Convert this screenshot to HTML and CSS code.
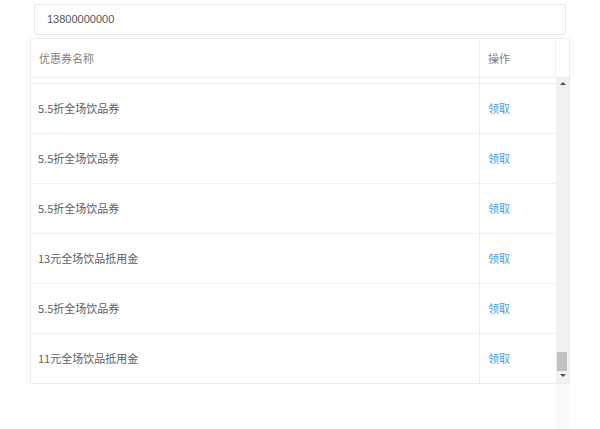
FILE: index.html
```html
<!DOCTYPE html>
<html lang="zh">
<head>
<meta charset="utf-8">
<link rel="stylesheet" href="styles.css">
</head>
<body>
<div class="search">13800000000</div>
<div class="table">
  <div class="thead">
    <div class="th name">优惠券名称</div>
    <div class="th op">操作</div>
    <div class="th gutter"></div>
  </div>
  <div class="tbody">
    <div class="rows">
      <div class="partial"><div class="c1"></div><div class="c2"></div></div>
      <div class="row"><div class="c1">5.5折全场饮品券</div><div class="c2"><a>领取</a></div></div>
      <div class="row"><div class="c1">5.5折全场饮品券</div><div class="c2"><a>领取</a></div></div>
      <div class="row"><div class="c1">5.5折全场饮品券</div><div class="c2"><a>领取</a></div></div>
      <div class="row"><div class="c1">13元全场饮品抵用金</div><div class="c2"><a>领取</a></div></div>
      <div class="row"><div class="c1">5.5折全场饮品券</div><div class="c2"><a>领取</a></div></div>
      <div class="row"><div class="c1">11元全场饮品抵用金</div><div class="c2"><a>领取</a></div></div>
    </div>
    <div class="scrollbar">
      <div class="arrow up"></div>
      <div class="track"><div class="thumb"></div></div>
      <div class="arrow down"></div>
    </div>
  </div>
</div>
<div class="ghost"></div>
</body>
</html>
```
FILE: styles.css
```css
html, body { margin: 0; padding: 0; background: #fff; }
body {
  font-family: "Noto Sans CJK SC", "Liberation Sans", sans-serif;
  font-size: 11px;
  color: #5e5e5e;
  width: 600px;
  height: 429px;
  overflow: hidden;
}
.search {
  box-sizing: border-box;
  margin: 4px 0 0 34px;
  width: 532px;
  height: 31px;
  border: 1px solid #e6e6e6;
  border-radius: 3px;
  padding-left: 12px;
  line-height: 29px;
  font-family: "Liberation Sans", "Noto Sans CJK SC", sans-serif;
  font-size: 11px;
  color: #555;
}
.table {
  box-sizing: border-box;
  margin: 3px 0 0 30px;
  width: 540px;
  border: 1px solid #ececec;
  border-top-color: #f0f0f0;
}
.thead {
  display: flex;
  height: 38px;
  border-bottom: 1px solid #ededed;
}
.th {
  box-sizing: border-box;
  line-height: 38px;
  color: #808080;
  padding-left: 8px;
}
.th.name { width: 449px; border-right: 1px solid #efefef; }
.th.op { width: 76px; border-right: 1px solid #efefef; }
.th.gutter { flex: 1; }
.tbody {
  display: flex;
  height: 305px;
}
.rows { width: 525px; }
.partial { display: flex; height: 5px; border-bottom: 1px solid #ededed; }
.partial .c1 { width: 449px; border-right: 1px solid #efefef; }
.row {
  display: flex;
  height: 49px;
  border-bottom: 1px solid #efefef;
}
.row:last-child { border-bottom: none; }
.c1 {
  box-sizing: border-box;
  width: 449px;
  border-right: 1px solid #efefef;
  padding-left: 7px;
  line-height: 48px;
  color: #5e5e5e;
}
.c2 {
  box-sizing: border-box;
  flex: 1;
  padding-left: 8px;
  line-height: 48px;
}
.c2 a { color: #4a9ee0; }
.scrollbar {
  width: 13px;
  background: #f1f1f1;
  display: flex;
  flex-direction: column;
}
.arrow { height: 12px; position: relative; }
.arrow::after {
  content: "";
  position: absolute;
  left: 4px;
  width: 0; height: 0;
  border-left: 3px solid transparent;
  border-right: 3px solid transparent;
}
.arrow.up::after { top: 4px; border-bottom: 3px solid #505050; }
.arrow.down::after { top: 3px; border-top: 3px solid #505050; }
.track { flex: 1; display: flex; flex-direction: column; justify-content: flex-end; padding: 0 2px 0 1px; }
.thumb { height: 19px; background: #c1c1c1; }
.ghost {
  margin-left: 556px;
  width: 13px;
  height: 60px;
  background: #fafafa;
}
```
